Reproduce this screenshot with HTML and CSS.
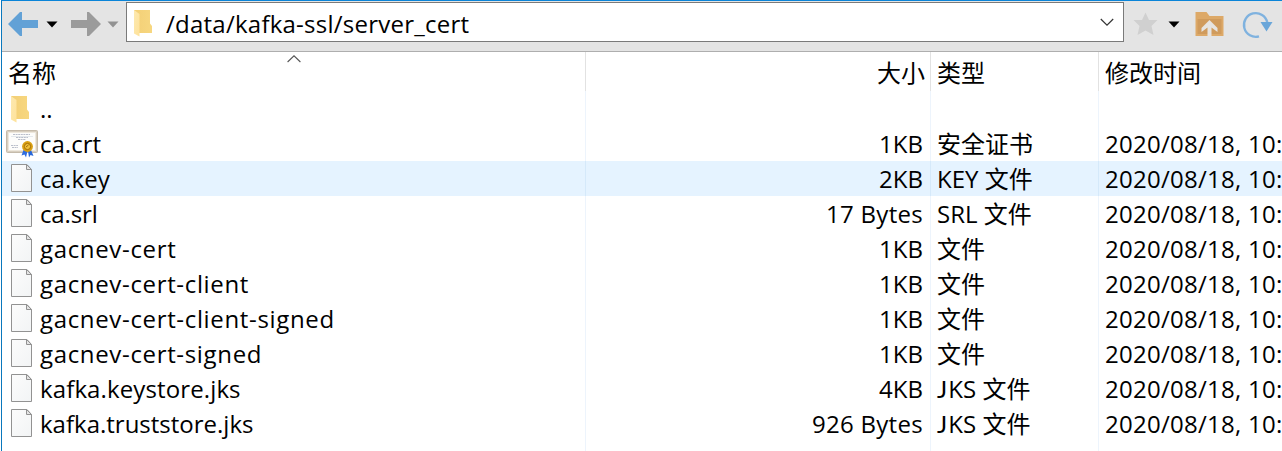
FILE: index.html
```html
<!DOCTYPE html>
<html lang="zh-CN">
<head>
<meta charset="utf-8">
<title>/data/kafka-ssl/server_cert</title>
<link rel="stylesheet" href="styles.css">
</head>
<body>
<svg class="defs" width="0" height="0" aria-hidden="true">
  <defs>
    <linearGradient id="fold" x1="0" y1="0" x2="1" y2="0"><stop offset="0" stop-color="#f3cf76"/><stop offset="1" stop-color="#f7d780"/></linearGradient>
    <linearGradient id="flap" x1="0" y1="0" x2="1" y2="1"><stop offset="0" stop-color="#fde9b0"/><stop offset="1" stop-color="#fee29a"/></linearGradient>
    <linearGradient id="paper" x1="0" y1="0" x2="1" y2="1"><stop offset="0" stop-color="#fcfcfc"/><stop offset="1" stop-color="#f2f4f5"/></linearGradient>
    <symbol id="folder" viewBox="0 0 20 28">
      <path d="M1 1H17V14.500L19 17V24H4z" fill="url(#fold)"/>
      <path d="M1 1L6.500 5V27.500L1 24.500z" fill="url(#flap)"/>
    </symbol>
    <symbol id="file" viewBox="0 0 22 29">
      <path d="M.5 .5H16L20.500 5.500V27.500H.5z" fill="url(#paper)" stroke="#929292"/>
      <path d="M15.500 .5V5.500H20.500z" fill="#e4e4e4" stroke="#929292"/>
    </symbol>
    <symbol id="cert" viewBox="0 0 32 29">
      <rect x=".5" y="1.500" width="31" height="22" rx="1" fill="#d8cfc0" stroke="#c5bbab"/>
      <rect x="2.500" y="3.500" width="27" height="18" fill="#fdfdfb" stroke="#eee8dd"/>
      <path d="M7 5.500H24M10 8.500H22M12 10.500H20M5 16.500H12M6 18.500H12" stroke="#b2b8c5" stroke-dasharray="2 .6" stroke-width=".9"/>
      <path d="M5 7.500H27" stroke="#dde3ea" stroke-width=".8"/>
      <path d="M17.500 21L15.500 26.500L18.500 25.500L20 28.500L21.500 22z" fill="#2d6ce0"/>
      <path d="M22 22L23 28.500L24.500 26L27.500 27L25 21z" fill="#2867d8"/>
      <circle cx="21.500" cy="17.500" r="5.400" fill="#d99f12"/>
      <circle cx="21.500" cy="17.500" r="3.100" fill="#efc03a" stroke="#a66f05"/>
      <path d="M20 18L22.500 16" stroke="#9f6c0a"/>
    </symbol>
  </defs>
</svg>
<div class="window">
  <header class="toolbar">
    <svg class="arrow" width="30" height="26" viewBox="0 0 30 26"><path d="M0 14L12 2H14V10H30V18H14V26H12z" fill="#62a1d6"/></svg>
    <svg class="caret" width="12" height="7" viewBox="0 0 12 7"><path d="M.5 .5H11.500L6 6.500z" fill="#000"/></svg>
    <svg class="arrow forward" width="30" height="26" viewBox="0 0 30 26"><path d="M30 14L18 2H16V10H0V18H16V26H18z" fill="#9b9b9b"/></svg>
    <svg class="caret" width="12" height="7" viewBox="0 0 12 7"><path d="M.5 .5H11.500L6 6.500z" fill="#929292"/></svg>
    <div class="address">
      <svg class="folder" width="20" height="28"><use href="#folder"/></svg>
      <span class="path">/data/kafka-ssl/server_cert</span>
      <svg class="chevron" width="14" height="9" viewBox="0 0 14 9"><path d="M.8 1L7 7.200L13.200 1" fill="none" stroke="#333" stroke-width="1.200"/></svg>
    </div>
    <svg class="star" width="25" height="24" viewBox="0 0 25 24"><path d="M12.500 .5L16 8H24.500L18.500 14L20.500 23L12.500 18.500L4.500 23L6.500 14L.5 8H9z" fill="#d0d0d0"/></svg>
    <svg class="caret" width="12" height="7" viewBox="0 0 12 7"><path d="M.5 .5H11.500L6 6.500z" fill="#000"/></svg>
    <svg class="up" width="29" height="28" viewBox="0 0 29 28"><path d="M.5 0H11.500L14.500 4H28.500V24H.5z" fill="#dda968"/><path d="M2.500 7H26.500V22H2.500z" fill="#d09b5c"/><path d="M14.500 8L22.500 16V20L16.500 15.500V27H12.500V15.500L6.500 20V16z" fill="#e6e4e1"/></svg>
    <svg class="refresh" width="32" height="28" viewBox="0 0 32 28"><path d="M18 25.300A11.800 11.800 0 1 1 26.300 11.500" fill="none" stroke="#7fb2df" stroke-width="2.300"/><path d="M19.500 11H31.500L25.500 20.500z" fill="#6aa6d9"/></svg>
  </header>
  <main class="list">
    <div class="row head">
      <div class="name">名称</div><div class="size">大小</div><div class="type">类型</div><div class="time">修改时间</div>
      <svg class="sort" width="14" height="8" viewBox="0 0 14 8"><path d="M.6 7L7 .8L13.400 7" fill="none" stroke="#555" stroke-width="1.100"/></svg>
    </div>
    <div class="row"><div class="name"><svg class="folder" width="20" height="28"><use href="#folder"/></svg><span>..</span></div><div class="size"></div><div class="type"></div><div class="time"></div></div>
    <div class="row"><div class="name"><svg class="cert" width="32" height="29"><use href="#cert"/></svg><span>ca.crt</span></div><div class="size">1KB</div><div class="type">安全证书</div><div class="time">2020/08/18, 10:</div></div>
    <div class="row selected"><div class="name"><svg class="file" width="22" height="29"><use href="#file"/></svg><span class="loose">ca.key</span></div><div class="size">2KB</div><div class="type">KEY 文件</div><div class="time">2020/08/18, 10:</div></div>
    <div class="row"><div class="name"><svg class="file" width="22" height="29"><use href="#file"/></svg><span class="snug">ca.srl</span></div><div class="size bytes">17 Bytes</div><div class="type">SRL 文件</div><div class="time">2020/08/18, 10:</div></div>
    <div class="row"><div class="name"><svg class="file" width="22" height="29"><use href="#file"/></svg><span class="wide">gacnev-cert</span></div><div class="size">1KB</div><div class="type">文件</div><div class="time">2020/08/18, 10:</div></div>
    <div class="row"><div class="name"><svg class="file" width="22" height="29"><use href="#file"/></svg><span class="wide">gacnev-cert-client</span></div><div class="size">1KB</div><div class="type">文件</div><div class="time">2020/08/18, 10:</div></div>
    <div class="row"><div class="name"><svg class="file" width="22" height="29"><use href="#file"/></svg><span class="wide">gacnev-cert-client-signed</span></div><div class="size">1KB</div><div class="type">文件</div><div class="time">2020/08/18, 10:</div></div>
    <div class="row"><div class="name"><svg class="file" width="22" height="29"><use href="#file"/></svg><span class="wide">gacnev-cert-signed</span></div><div class="size">1KB</div><div class="type">文件</div><div class="time">2020/08/18, 10:</div></div>
    <div class="row"><div class="name"><svg class="file" width="22" height="29"><use href="#file"/></svg><span class="loose">kafka.keystore.jks</span></div><div class="size">4KB</div><div class="type"><span class="jay">J</span>KS 文件</div><div class="time">2020/08/18, 10:</div></div>
    <div class="row"><div class="name"><svg class="file" width="22" height="29"><use href="#file"/></svg><span>kafka.truststore.jks</span></div><div class="size bytes">926 Bytes</div><div class="type"><span class="jay">J</span>KS 文件</div><div class="time">2020/08/18, 10:</div></div>
    <div class="row filler"><div class="name"></div><div class="size"></div><div class="type"></div><div class="time"></div></div>
  </main>
</div>
</body>
</html>
```

FILE: styles.css
```css
* { box-sizing: border-box; }
body {
  margin: 0;
  overflow: hidden;
  background: #fff;
  color: #000;
  font: 24px/35px "Open Sans", "Noto Sans CJK SC", sans-serif;
}
svg { display: block; flex: none; }
.defs { position: absolute; }
.window {
  height: 451px;
  margin-left: 1px;
  border-top: 1px solid #0a84d8;
  border-left: 1px solid #0a78bd;
  overflow: hidden;
}
.toolbar {
  display: flex;
  align-items: flex-start;
  height: 51px;
  padding-left: 6px;
  background: #e4e4e4;
  border-bottom: 1px solid #aeaeae;
}
.arrow { margin-top: 9px; }
.arrow + .caret { margin: 20px 0 0 8px; }
.arrow.forward { margin-left: 13px; }
.arrow.forward + .caret { margin-left: 6px; }
.address {
  display: flex;
  align-items: flex-start;
  width: 998px;
  height: 40px;
  margin: 1px 0 0 7px;
  padding-left: 6px;
  border: 1px solid #7a7a7a;
  background: #fff;
}
.address .folder { margin-top: 6px; }
.path { flex: 1; margin-left: 13px; line-height: 41px; white-space: pre; letter-spacing: .24px; }
.chevron { margin: 15px 9px 0 0; }
.star { margin: 11px 0 0 9px; }
.star + .caret { margin: 20px 0 0 10px; }
.up { margin: 11px 0 0 15px; }
.refresh { margin: 10px 0 0 17px; }
.row {
  display: grid;
  grid-template-columns: 584px 345px 168px 1fr;
  height: 35px;
  white-space: pre;
  overflow: hidden;
}
.row > div { border-right: 1px solid #edf4fc; }
.row > .time { border-right: 0; letter-spacing: .26px; }
.name { display: flex; align-items: center; }
.name .folder { margin: 0 10px 0 8px; }
.name .cert { margin-left: 4px; margin-right: 2px; }
.name .file { margin: 0 7px 0 9px; }
.wide { letter-spacing: .66px; }
.loose { letter-spacing: .12px; }
.snug { letter-spacing: -.15px; }
.jay { font-family: Lato, sans-serif; line-height: 1; letter-spacing: 1.2px; }
.size { padding-right: 7px; text-align: right; }
.bytes { letter-spacing: .3px; }
.type, .time { padding-left: 6px; }
.selected { background: #e5f3ff; }
.row.selected > div { border-color: #d5e9fa; }
.head { position: relative; height: 39px; line-height: 41px; }
.head > div { border-color: #e2e2e2; }
.head > .time { letter-spacing: 0; }
.head .name { padding-left: 6px; }
.head .size { padding-right: 5px; }
.sort { position: absolute; left: 285px; top: 3px; }
```
